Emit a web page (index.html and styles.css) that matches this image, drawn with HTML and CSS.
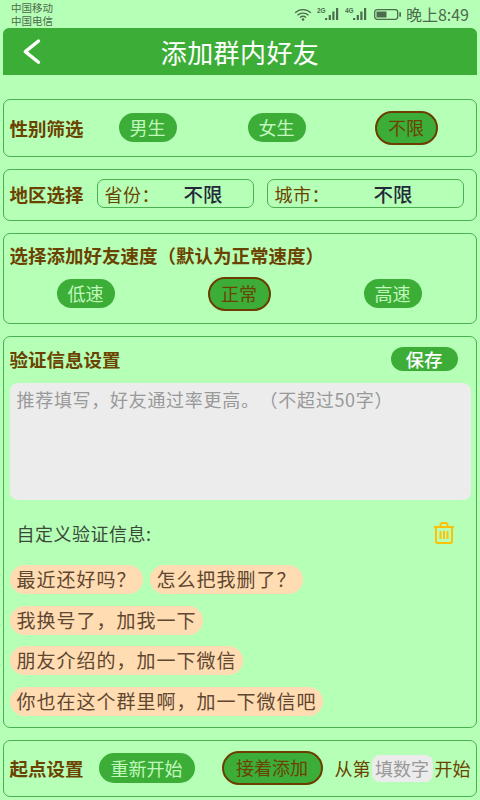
FILE: index.html
```html
<!DOCTYPE html>
<html lang="zh-CN">
<head>
    <meta charset="UTF-8">
    <meta name="viewport" content="width=device-width, initial-scale=1.0">
    <title>添加群内好友</title>
    <link rel="stylesheet" href="styles.css">
</head>
<body>
    <div class="status-bar">
        <div class="carriers">
            <span>中国移动</span>
            <span>中国电信</span>
        </div>
        <div class="status-right">
            <svg class="wifi" width="18" height="13" viewBox="0 0 19 14">
                <path d="M1 5.2C6 .6 13 .6 18 5.2M3.6 7.8C7 4.8 12 4.8 15.4 7.8M6.2 10.2C8 8.8 11 8.8 12.8 10.2" fill="none" stroke="#4d6b4d" stroke-width="1.5"/>
                <circle cx="9.5" cy="12.4" r="1.4" fill="#4d6b4d"/>
            </svg>
            <svg class="signal" width="22" height="14" viewBox="0 0 22 14">
                <text x="0" y="5.500" class="net">2G</text>
                <path d="M8 13h2.200v-2H8zM11.700 13h2.200V8h-2.200zM15.300 13h2.200V4.500h-2.200zM19 13h2.200V1H19z" fill="#4d6b4d"/>
            </svg>
            <svg class="signal" width="22" height="14" viewBox="0 0 22 14">
                <text x="0" y="5.500" class="net">4G</text>
                <path d="M8 13h2.200v-2H8zM11.700 13h2.200V8h-2.200zM15.300 13h2.200V4.500h-2.200zM19 13h2.200V1H19z" fill="#4d6b4d"/>
            </svg>
            <svg class="battery" width="27" height="11" viewBox="0 0 27 11">
                <rect x=".7" y=".7" width="23" height="9.600" rx="2.500" fill="none" stroke="#4d6b4d" stroke-width="1.300"/>
                <rect x="2.500" y="2.500" width="10" height="6" fill="#4d6b4d"/>
                <rect x="25.300" y="3.300" width="1.700" height="4.400" fill="#4d6b4d"/>
            </svg>
            <span class="time">晚上8:49</span>
        </div>
    </div>

    <div class="title-bar">
        <svg class="back" width="20" height="30" viewBox="0 0 20 30">
            <path d="M17.500 4 4.300 14.600 17.500 25.300" fill="none" stroke="#fff" stroke-width="3.400" stroke-linecap="round" stroke-linejoin="round"/>
        </svg>
        <h1>添加群内好友</h1>
    </div>

    <div class="card gender-card">
        <span class="label">性别筛选</span>
        <div class="pill pill-gender-a">男生</div>
        <div class="pill pill-gender-b">女生</div>
        <div class="pill selected pill-gender-c">不限</div>
    </div>

    <div class="card area-card">
        <span class="label">地区选择</span>
        <div class="area-box province">
            <span class="area-name">省份：</span>
            <span class="area-value">不限</span>
        </div>
        <div class="area-box city">
            <span class="area-name">城市：</span>
            <span class="area-value">不限</span>
        </div>
    </div>

    <div class="card speed-card">
        <div class="label">选择添加好友速度（默认为正常速度）</div>
        <div class="speed-row">
            <div class="pill">低速</div>
            <div class="pill selected">正常</div>
            <div class="pill">高速</div>
        </div>
    </div>

    <div class="card verify-card">
        <div class="verify-head">
            <span class="label">验证信息设置</span>
            <div class="save-btn">保存</div>
        </div>
        <div class="verify-input">推荐填写，好友通过率更高。（不超过50字）</div>
        <div class="custom-head">
            <span>自定义验证信息:</span>
            <svg class="trash" width="22" height="22" viewBox="0 0 22 22">
                <path d="M1 5h20M7.500 5V2.800Q7.500 1 9.300 1h3.400q1.800 0 1.800 1.800V5M3 5v14.500Q3 21 4.500 21h13q1.500 0 1.500-1.500V5M7.500 9v8M11 9v8M14.500 9v8" fill="none" stroke="#ffc107" stroke-width="2"/>
            </svg>
        </div>
        <div class="chips">
            <div class="chip-row">
                <span class="chip">最近还好吗？</span>
                <span class="chip">怎么把我删了？</span>
            </div>
            <div class="chip-row"><span class="chip">我换号了，加我一下</span></div>
            <div class="chip-row"><span class="chip">朋友介绍的，加一下微信</span></div>
            <div class="chip-row"><span class="chip">你也在这个群里啊，加一下微信吧</span></div>
        </div>
    </div>

    <div class="card start-card">
        <span class="label">起点设置</span>
        <div class="pill pill-wide">重新开始</div>
        <div class="pill selected pill-wide">接着添加</div>
        <div class="start-from">
            <span>从第</span>
            <span class="num-input">填数字</span>
            <span>开始</span>
        </div>
    </div>
</body>
</html>
```

FILE: styles.css
```css
* {
    padding: 0;
    margin: 0;
    box-sizing: border-box;
}

body {
    width: 480px;
    height: 800px;
    overflow: hidden;
    background-color: #b6ffb6;
    font-family: "Noto Sans CJK SC", "Noto Sans", sans-serif;
    color: #6b4300;
    text-spacing-trim: space-all;
}

.status-bar {
    height: 28px;
    display: flex;
    justify-content: space-between;
    padding: 1px 11px 0;
    color: #4d6b4d;
}

.carriers {
    display: flex;
    flex-direction: column;
    font-size: 10.5px;
    line-height: 13px;
}

.status-right {
    display: flex;
    align-items: center;
    height: 26px;
}

.wifi { margin-right: 5px; }
.signal { margin-right: 6px; }
.battery { margin: 0 5px 0 1px; }

.net {
    font-family: "Liberation Sans", sans-serif;
    font-size: 6.5px;
    font-weight: bold;
    fill: #4d6b4d;
}

.time {
    font-size: 16px;
    line-height: 20px;
}

.title-bar {
    height: 47px;
    margin: 0 3px;
    background-color: #3cae38;
    border-radius: 6px 6px 0 0;
    position: relative;
    display: flex;
    align-items: center;
    justify-content: center;
}

.back {
    position: absolute;
    left: 18px;
    top: 9px;
}

h1 {
    font-size: 26px;
    line-height: 47px;
    font-weight: 400;
    letter-spacing: .4px;
    color: #fff;
}

.card {
    margin: 12px 3px 0;
    border: 1.5px solid #4caf50;
    border-radius: 7px;
    padding: 0 5.500px;
}

.label {
    font-size: 18.500px;
    line-height: 24px;
    font-weight: 700;
    white-space: nowrap;
}

.pill {
    width: 58px;
    height: 29px;
    border-radius: 15px;
    background-color: #3cae38;
    color: #c2f8bd;
    font-size: 18px;
    line-height: 29px;
    text-align: center;
    white-space: nowrap;
}

.pill.selected {
    width: 63px;
    height: 34px;
    line-height: 29px;
    border: 2.500px solid #6b3d00;
    border-radius: 17px;
    color: #6b4300;
}

.gender-card {
    margin-top: 24px;
    height: 57.500px;
    display: flex;
    align-items: center;
}

.pill-gender-a { margin-left: 35px; }
.pill-gender-b { margin-left: 71px; }
.pill-gender-c { margin-left: 69px; }

.area-card {
    height: 52px;
    padding-bottom: 2px;
    display: flex;
    align-items: center;
}

.area-box {
    height: 28.500px;
    border: 1.500px solid #4caf50;
    border-radius: 7px;
    display: flex;
    align-items: center;
    padding-left: 7px;
    font-size: 18px;
    white-space: nowrap;
}

.province { width: 157px; margin-left: 13px; }
.city { width: 197px; margin-left: 13px; }
.area-name { width: 79px; letter-spacing: .5px; }
.city .area-name { width: 99px; }

.area-value {
    color: #222a3a;
    font-size: 19.500px;
    font-weight: 500;
}

.speed-card {
    height: 91.500px;
    padding-top: 9px;
}

.speed-row {
    margin-top: 10px;
    display: flex;
    align-items: center;
    padding-left: 47px;
    gap: 93px;
}

.verify-card {
    height: 391.500px;
}

.verify-head {
    height: 46px;
    display: flex;
    align-items: center;
    justify-content: space-between;
    padding: 0 13px 2px 0;
}

.save-btn {
    width: 67px;
    height: 24px;
    border-radius: 12px;
    background-color: #3cae38;
    color: #fff;
    font-size: 18.500px;
    font-weight: 500;
    line-height: 24px;
    text-align: center;
}

.verify-input {
    height: 117px;
    background-color: #ececec;
    border-radius: 8px;
    padding: 3px 7px;
    color: #999;
    font-size: 18px;
    letter-spacing: .7px;
    line-height: 27px;
    white-space: nowrap;
}

.custom-head {
    height: 65px;
    display: flex;
    align-items: center;
    justify-content: space-between;
    padding: 0 16px 0 7px;
    color: #3a4a3a;
    font-size: 18px;
    letter-spacing: .5px;
}

.chips {
    display: flex;
    flex-direction: column;
    gap: 11.500px;
}

.chip-row {
    display: flex;
    gap: 7px;
}

.chip {
    height: 29px;
    padding: 0 6px 0 7px;
    border-radius: 15px;
    background-color: #ffdcb2;
    color: #5e4630;
    font-size: 19px;
    letter-spacing: 1px;
    line-height: 28px;
    white-space: nowrap;
}

.start-card {
    height: 57.500px;
    display: flex;
    align-items: center;
}

.pill-wide {
    width: 96px;
    margin-left: 15px;
    height: 30px;
    line-height: 30px;
}

.pill.selected.pill-wide {
    width: 101px;
    margin-left: 27px;
    height: 34px;
}

.start-from {
    margin-left: 12px;
    display: flex;
    align-items: center;
    font-size: 18px;
    white-space: nowrap;
}

.num-input {
    width: 61px;
    height: 27px;
    margin: 0 2px 0 1px;
    border-radius: 8px;
    background-color: #ececec;
    color: #999;
    line-height: 27px;
    text-align: center;
}
```
